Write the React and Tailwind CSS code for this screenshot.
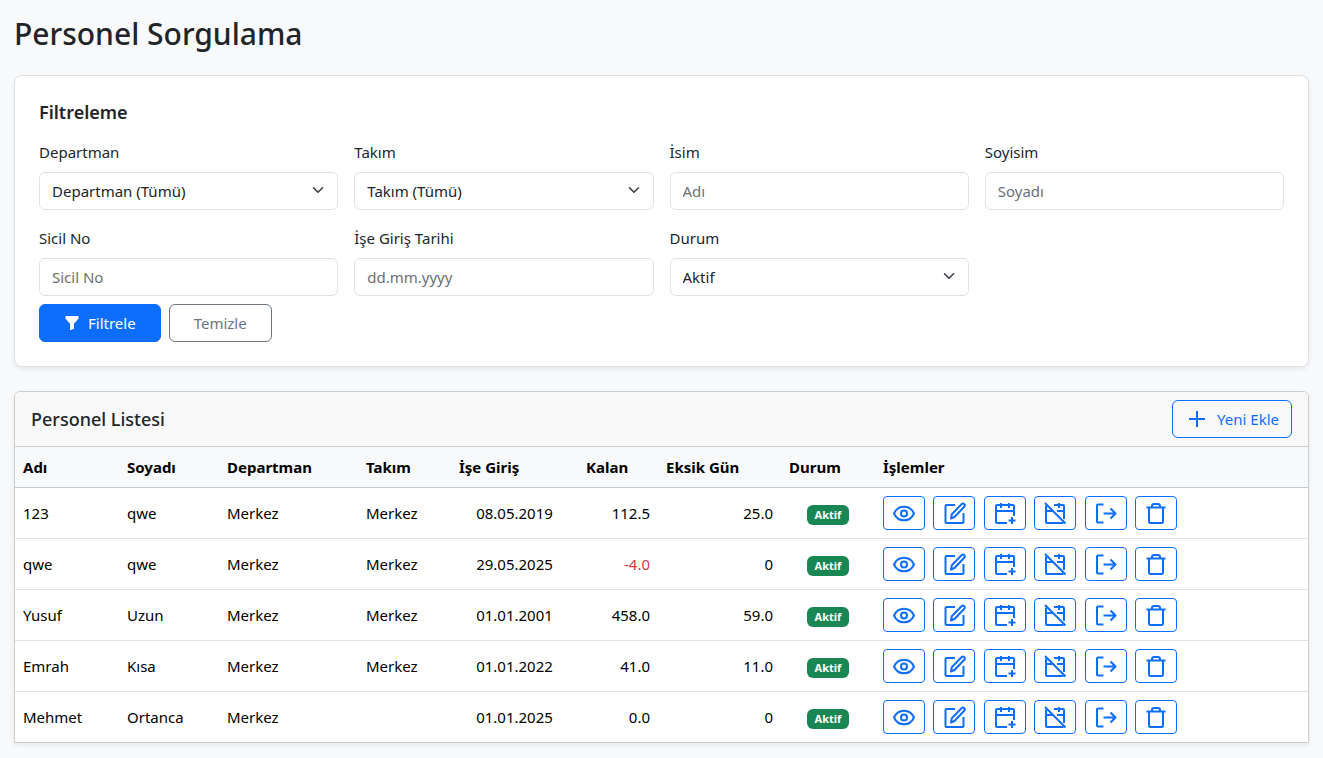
import { useState } from "react";

const inputClass =
    "h-[38px] w-full rounded-md border border-[#dee2e6] bg-white px-3 text-[15px] text-[#212529] outline-none placeholder:text-[#6b7075] focus:border-[#86b7fe]";

const initialFilters = {
    department: "",
    team: "",
    name: "",
    surname: "",
    registryNo: "",
    startDate: "",
    status: "aktif",
};

const employees = [
    { id: 1, name: "123", surname: "qwe", department: "Merkez", team: "Merkez", startDate: "08.05.2019", remaining: "112.5", missing: "25.0" },
    { id: 2, name: "qwe", surname: "qwe", department: "Merkez", team: "Merkez", startDate: "29.05.2025", remaining: "-4.0", missing: "0" },
    { id: 3, name: "Yusuf", surname: "Uzun", department: "Merkez", team: "Merkez", startDate: "01.01.2001", remaining: "458.0", missing: "59.0" },
    { id: 4, name: "Emrah", surname: "Kısa", department: "Merkez", team: "Merkez", startDate: "01.01.2022", remaining: "41.0", missing: "11.0" },
    { id: 5, name: "Mehmet", surname: "Ortanca", department: "Merkez", team: "", startDate: "01.01.2025", remaining: "0.0", missing: "0" },
];

const columns = [
    { label: "Adı", width: "w-[104px]" },
    { label: "Soyadı", width: "w-[100px]" },
    { label: "Departman", width: "w-[139px]" },
    { label: "Takım", width: "w-[93px]" },
    { label: "İşe Giriş", width: "w-[127px]" },
    { label: "Kalan", width: "w-[80px]" },
    { label: "Eksik Gün", width: "w-[123px]" },
    { label: "Durum", width: "w-[94px]" },
    { label: "İşlemler", width: "" },
];

const actions = [
    {
        label: "Görüntüle",
        icon: (
            <>
                <path d="M2 12.500c2-4.400 5.600-6.800 10-6.800s8 2.400 10 6.800c-2 4.400-5.600 6.800-10 6.800S4 16.900 2 12.500z" />
                <circle cx="12" cy="12.5" r="3" />
            </>
        ),
    },
    {
        label: "Düzenle",
        icon: (
            <>
                <path d="M13 4H4.500a1 1 0 0 0-1 1v16a1 1 0 0 0 1 1h16a1 1 0 0 0 1-1v-9" />
                <path d="M9 17.500l.8-4.300 9.700-10a1.800 1.800 0 0 1 2.700 2.500L12.500 16z" />
            </>
        ),
    },
    {
        label: "İzin ekle",
        icon: (
            <>
                <path d="M14 22H4a1 1 0 0 1-1-1V5a1 1 0 0 1 1-1h16a1 1 0 0 1 1 1v10" />
                <path d="M3 10h18M8 2v5M16 2v5M19 16v7M15.500 19.500h7" />
            </>
        ),
    },
    {
        label: "Eksik gün ekle",
        icon: (
            <>
                <path d="M3 4.500V21a1 1 0 0 0 1 1h16.500M11 4h9a1 1 0 0 1 1 1v13" />
                <path d="M3 10h6.500M14 10h7M16 2v5M2 2l20.500 20.500" />
            </>
        ),
    },
    {
        label: "İşten çıkar",
        icon: (
            <>
                <path d="M9.500 3.500H4a1 1 0 0 0-1 1v16a1 1 0 0 0 1 1h5.500" />
                <path d="M9.500 12.500H21.500M16.500 7.500l5 5-5 5" />
            </>
        ),
    },
    {
        label: "Sil",
        icon: <path d="M2.500 6.500h19M5 6.500v14A1.500 1.500 0 0 0 6.500 22h11a1.500 1.500 0 0 0 1.500-1.500v-14M8 6.500V5a2 2 0 0 1 2-2h4a2 2 0 0 1 2 2v1.500" />,
    },
];

function Field({ id, label, children }) {
    return (
        <div>
            <label htmlFor={id} className="mb-2 block leading-6">{label}</label>
            {children}
        </div>
    );
}

function Select({ id, value, onChange, children }) {
    return (
        <div className="relative">
            <select id={id} name={id} value={value} onChange={onChange} className={`${inputClass} appearance-none pr-9`}>
                {children}
            </select>
            <svg viewBox="0 0 16 16" className="pointer-events-none absolute top-3 right-3.5 size-3 fill-none stroke-[#343a40] stroke-2" strokeLinecap="round" strokeLinejoin="round">
                <path d="m2 5 6 6 6-6" />
            </svg>
        </div>
    );
}

function FilterCard() {
    const [filters, setFilters] = useState(initialFilters);

    const handleChange = (e) => {
        setFilters({ ...filters, [e.target.name]: e.target.value });
    };

    return (
        <section className="mb-6 rounded-lg border border-[#dee2e6] bg-white p-6 shadow-[0_2px_4px_rgba(0,0,0,0.075)]">
            <h2 className="mb-4 text-lg leading-6 font-semibold">Filtreleme</h2>
            <form onSubmit={(e) => e.preventDefault()}>
                <div className="grid grid-cols-1 gap-4 sm:grid-cols-2 lg:grid-cols-4">
                    <Field id="department" label="Departman">
                        <Select id="department" value={filters.department} onChange={handleChange}>
                            <option value="">Departman (Tümü)</option>
                            <option value="merkez">Merkez</option>
                        </Select>
                    </Field>
                    <Field id="team" label="Takım">
                        <Select id="team" value={filters.team} onChange={handleChange}>
                            <option value="">Takım (Tümü)</option>
                            <option value="merkez">Merkez</option>
                        </Select>
                    </Field>
                    <Field id="name" label="İsim">
                        <input id="name" name="name" type="text" placeholder="Adı" value={filters.name} onChange={handleChange} className={inputClass} />
                    </Field>
                    <Field id="surname" label="Soyisim">
                        <input id="surname" name="surname" type="text" placeholder="Soyadı" value={filters.surname} onChange={handleChange} className={inputClass} />
                    </Field>
                    <Field id="registryNo" label="Sicil No">
                        <input id="registryNo" name="registryNo" type="text" placeholder="Sicil No" value={filters.registryNo} onChange={handleChange} className={inputClass} />
                    </Field>
                    <Field id="startDate" label="İşe Giriş Tarihi">
                        <input id="startDate" name="startDate" type="text" placeholder="dd.mm.yyyy" value={filters.startDate} onChange={handleChange} className={inputClass} />
                    </Field>
                    <Field id="status" label="Durum">
                        <Select id="status" value={filters.status} onChange={handleChange}>
                            <option value="aktif">Aktif</option>
                            <option value="pasif">Pasif</option>
                        </Select>
                    </Field>
                </div>
                <div className="mt-2 flex gap-2">
                    <button type="submit" className="flex h-[38px] items-center gap-2 rounded-md border border-[#0d6efd] bg-[#0d6efd] px-6 text-white hover:bg-[#0b5ed7]">
                        <svg viewBox="0 0 16 16" className="size-4 fill-current">
                            <path d="M1.500 1.500A.5.5 0 0 1 2 1h12a.5.5 0 0 1 .5.5v2a.5.5 0 0 1-.128.334L10 8.692V13.500a.5.5 0 0 1-.342.474l-3 1A.5.5 0 0 1 6 14.500V8.692L1.628 3.834A.5.5 0 0 1 1.500 3.500z" />
                        </svg>
                        Filtrele
                    </button>
                    <button type="button" onClick={() => setFilters(initialFilters)} className="h-[38px] rounded-md border border-[#6c757d] px-6 text-[#6c757d] hover:bg-gray-100">
                        Temizle
                    </button>
                </div>
            </form>
        </section>
    );
}

function EmployeeRow({ employee }) {
    return (
        <tr className="border-b border-[#dee2e6] last:border-b-0">
            <td className="p-2">{employee.name}</td>
            <td className="p-2">{employee.surname}</td>
            <td className="p-2">{employee.department}</td>
            <td className="p-2">{employee.team}</td>
            <td className="p-2 text-center">{employee.startDate}</td>
            <td className={`p-2 text-right ${Number(employee.remaining) < 0 ? "text-[#dc3545]" : ""}`}>{employee.remaining}</td>
            <td className="p-2 text-right">{employee.missing}</td>
            <td className="p-2 text-center">
                <span className="inline-block rounded-md bg-[#198754] px-2 text-[11px] leading-5 font-bold text-white">Aktif</span>
            </td>
            <td className="p-2">
                <div className="flex w-[294px] justify-between">
                    {actions.map((action) => (
                        <button
                            key={action.label}
                            type="button"
                            aria-label={action.label}
                            className="flex h-[34px] w-[42px] items-center justify-center rounded border border-[#0d6efd] text-[#0d6efd] hover:bg-blue-50"
                        >
                            <svg viewBox="0 0 24 24" className="size-6 fill-none stroke-current stroke-2" strokeLinejoin="round">
                                {action.icon}
                            </svg>
                        </button>
                    ))}
                </div>
            </td>
        </tr>
    );
}

function EmployeeList() {
    return (
        <section className="overflow-hidden rounded-t-md border border-[#cbccce] bg-white shadow-[0_2px_4px_rgba(0,0,0,0.075)]">
            <div className="flex items-center justify-between border-b border-[#cbccce] bg-[#f8f8f8] px-4 py-2">
                <h2 className="text-lg leading-6 font-medium">Personel Listesi</h2>
                <button type="button" className="flex h-[38px] items-center gap-2 rounded-md border border-[#0d6efd] px-3 text-[#0d6efd] hover:bg-blue-50">
                    <svg viewBox="0 0 24 24" className="size-6 fill-none stroke-current stroke-2">
                        <path d="M12 4v16M4 12h16" />
                    </svg>
                    Yeni Ekle
                </button>
            </div>
            <div className="overflow-x-auto">
                <table className="w-full min-w-[1180px] table-fixed border-collapse text-left text-black">
                    <thead className="bg-[#f8f9fa]">
                        <tr className="border-b border-[#c6c7c8]">
                            {columns.map((column) => (
                                <th key={column.label} scope="col" className={`p-2 leading-6 font-bold ${column.width}`}>
                                    {column.label}
                                </th>
                            ))}
                        </tr>
                    </thead>
                    <tbody>
                        {employees.map((employee) => (
                            <EmployeeRow key={employee.id} employee={employee} />
                        ))}
                    </tbody>
                </table>
            </div>
        </section>
    );
}

export default function App() {
    return (
        <main className="min-h-screen bg-[#f8f9fa] px-3.5 pt-3.5 pb-3 font-['Noto_Sans','Open_Sans',sans-serif] text-[15px] text-[#212529]">
            <h1 className="mb-[21px] text-[30px] leading-10 font-medium">Personel Sorgulama</h1>
            <FilterCard />
            <EmployeeList />
        </main>
    );
}
